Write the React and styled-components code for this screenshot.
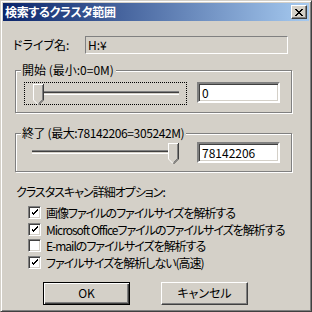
import React from 'react'
import styled, { createGlobalStyle } from 'styled-components'

const Global = createGlobalStyle`
  html, body { margin:0; padding:0; background:#d4d0c8; }
  body {
    font-family: "Noto Sans CJK JP", "Liberation Sans", sans-serif;
    font-size:12px;
  }
`

const Window = styled.div`
  width:312px;
  height:312px;
  box-sizing:border-box;
  background:#d4d0c8;
  border:1px solid;
  border-color:#d4d0c8 #404040 #404040 #d4d0c8;
  box-shadow:inset 1px 1px 0 #fff, inset -1px -1px 0 #808080;
  padding:2px;
  display:flex;
  flex-direction:column;
  font-family:"Noto Sans CJK JP", "Liberation Sans", sans-serif;
  font-size:12px;
  font-feature-settings:"palt";
  color:#000;
`

const TitleBar = styled.div`
  height:18px;
  flex-shrink:0;
  display:flex;
  align-items:center;
  justify-content:space-between;
  padding:0 2px;
  background:linear-gradient(to right, #0a246a, #a6caf0);
`

const TitleText = styled.div`
  color:#fff;
  font-weight:700;
  font-size:12px;
  line-height:18px;
  letter-spacing:-0.3px;
`

const CloseButton = styled.div`
  width:16px;
  height:14px;
  box-sizing:border-box;
  background:#d4d0c8;
  border:1px solid;
  border-color:#fff #404040 #404040 #fff;
  box-shadow:inset -1px -1px 0 #808080;
  display:flex;
  align-items:center;
  justify-content:center;
`

const Content = styled.div`
  display:flex;
  flex-direction:column;
  padding:15px 16px 0 10px;
`

const DriveRow = styled.div`
  display:flex;
  align-items:center;
  height:18px;
`

const Label = styled.div`
  width:${p => p.w || 72}px;
  line-height:14px;
  white-space:nowrap;
`

const ReadOnlyBox = styled.div`
  width:203px;
  height:18px;
  box-sizing:border-box;
  border:1px solid;
  border-color:#808080 #fff #fff #808080;
  padding-left:2px;
  line-height:16px;
`

const Group = styled.fieldset`
  margin:${p => p.top}px 0 0 2px;
  width:277px;
  box-sizing:border-box;
  border:1px solid #808080;
  box-shadow:inset 1px 1px 0 #fff, 1px 1px 0 #fff;
  padding:${p => p.pad}px 0 ${p => p.bottom}px 0;
  min-inline-size:0;
`

const Legend = styled.legend`
  margin-left:5px;
  padding:0 2px 0 1px;
  line-height:14px;
  background:#d4d0c8;
  white-space:nowrap;
  letter-spacing:${p => p.tight || 0}px;
`

const GroupRow = styled.div`
  display:flex;
  align-items:flex-start;
`

const SliderBox = styled.div`
  position:relative;
  width:163px;
  height:23px;
  box-sizing:border-box;
  margin-left:${p => p.left}px;
  outline:${p => (p.focus ? '1px dotted #000' : 'none')};
  outline-offset:-1px;
`

const Track = styled.div`
  position:absolute;
  left:14px;
  right:8px;
  top:9px;
  height:4px;
  box-sizing:border-box;
  border-top:1px solid #808080;
  border-bottom:1px solid #fff;
  background:#404040;
  box-shadow:inset 0 -1px 0 #d4d0c8;
`

const Thumb = styled.div`
  position:absolute;
  top:2px;
  left:${p => p.pos}px;
  line-height:0;
`

const EditBox = styled.div`
  width:83px;
  height:21px;
  box-sizing:border-box;
  margin-left:${p => p.left}px;
  margin-top:${p => p.top || 0}px;
  background:#fff;
  border:2px solid;
  border-color:#808080 #fff #fff #808080;
  box-shadow:inset 1px 1px 0 #404040, inset -1px -1px 0 #d4d0c8;
  padding-left:3px;
  line-height:17px;
`

const OptionsTitle = styled.div`
  margin:13px 0 0 3px;
  line-height:14px;
  letter-spacing:-1px;
`

const CheckList = styled.div`
  display:flex;
  flex-direction:column;
  margin:5px 0 0 15px;
`

const CheckRow = styled.div`
  display:flex;
  align-items:center;
  height:16.7px;
  gap:5px;
  white-space:nowrap;
  letter-spacing:-1px;
`

const Box = styled.div`
  width:13px;
  height:13px;
  box-sizing:border-box;
  background:#fff;
  border:1px solid;
  border-color:#808080 #fff #fff #808080;
  box-shadow:inset 1px 1px 0 #404040, inset -1px -1px 0 #d4d0c8;
  display:flex;
  align-items:center;
  justify-content:center;
  flex-shrink:0;
`

const ButtonRow = styled.div`
  display:flex;
  gap:31px;
  margin:11px 0 0 30px;
`

const Button = styled.div`
  width:87px;
  height:23px;
  box-sizing:border-box;
  background:#d4d0c8;
  border:1px solid;
  border-color:${p => (p.primary ? '#000' : '#fff #404040 #404040 #fff')};
  box-shadow:${p =>
    p.primary
      ? 'inset 1px 1px 0 #fff, inset -1px -1px 0 #404040, inset -2px -2px 0 #808080'
      : 'inset -1px -1px 0 #808080'};
  display:flex;
  align-items:center;
  justify-content:center;
  line-height:14px;
`

const ThumbIcon = () => (
  <svg width="11" height="21" viewBox="0 0 11 21" shapeRendering="crispEdges">
    <polygon points="0,0 11,0 11,16 5.5,21 0,16" fill="#d4d0c8" />
    <path d="M0.5 16V0.5H10" stroke="#fff" fill="none" />
    <path d="M0.5 16L5 20.5" stroke="#fff" fill="none" shapeRendering="auto" />
    <path d="M10.5 0V16" stroke="#404040" fill="none" />
    <path d="M10.5 16L5.5 21" stroke="#404040" fill="none" shapeRendering="auto" />
    <path d="M9.5 1V15.5" stroke="#808080" fill="none" />
    <path d="M9.5 15.5L5.5 19.5" stroke="#808080" fill="none" shapeRendering="auto" />
  </svg>
)

const Slider = ({ left, focus, atEnd }) => (
  <SliderBox left={left} focus={focus}>
    <Track />
    <Thumb pos={atEnd ? 150 : 9}>
      <ThumbIcon />
    </Thumb>
  </SliderBox>
)

const Check = ({ checked, children }) => (
  <CheckRow>
    <Box>
      {checked && (
        <svg width="7" height="7" viewBox="0 0 7 7" shapeRendering="crispEdges">
          <path d="M0 2h1v3h1v1h1v-1h1v-1h1v-1h1v-1h1v-2h-1v1h-1v1h-1v1h-1v1h-1v-1h-1v-1h-1z" fill="#000" />
        </svg>
      )}
    </Box>
    <span>{children}</span>
  </CheckRow>
)

export default function App() {
  return (
    <Window>
      <Global />
      <TitleBar>
        <TitleText>検索するクラスタ範囲</TitleText>
        <CloseButton>
          <svg width="8" height="7" viewBox="0 0 8 7" shapeRendering="crispEdges">
            <path d="M0 0h2v1h1v1h2v-1h1v-1h2v1h-1v1h-1v1h-1v1h1v1h1v1h1v1h-2v-1h-1v-1h-2v1h-1v1h-2v-1h1v-1h1v-1h1v-1h-1v-1h-1v-1h-1z" fill="#000" />
          </svg>
        </CloseButton>
      </TitleBar>
      <Content>
        <DriveRow>
          <Label>ドライブ名:</Label>
          <ReadOnlyBox>H:¥</ReadOnlyBox>
        </DriveRow>

        <Group top={9} pad={5} bottom={7}>
          <Legend>開始 (最小:0=0M)</Legend>
          <GroupRow>
            <Slider left={8} focus />
            <EditBox left={10}>0</EditBox>
          </GroupRow>
        </Group>

        <Group top={13} pad={1} bottom={7}>
          <Legend tight={-0.4}>終了 (最大:78142206=305242M)</Legend>
          <GroupRow>
            <Slider left={2} atEnd />
            <EditBox left={16} top={1}>78142206</EditBox>
          </GroupRow>
        </Group>

        <OptionsTitle>クラスタスキャン詳細オプション:</OptionsTitle>
        <CheckList>
          <Check checked>画像ファイルのファイルサイズを解析する</Check>
          <Check checked>Microsoft Officeファイルのファイルサイズを解析する</Check>
          <Check>E-mailのファイルサイズを解析する</Check>
          <Check checked>ファイルサイズを解析しない(高速)</Check>
        </CheckList>

        <ButtonRow>
          <Button primary>OK</Button>
          <Button>キャンセル</Button>
        </ButtonRow>
      </Content>
    </Window>
  )
}
